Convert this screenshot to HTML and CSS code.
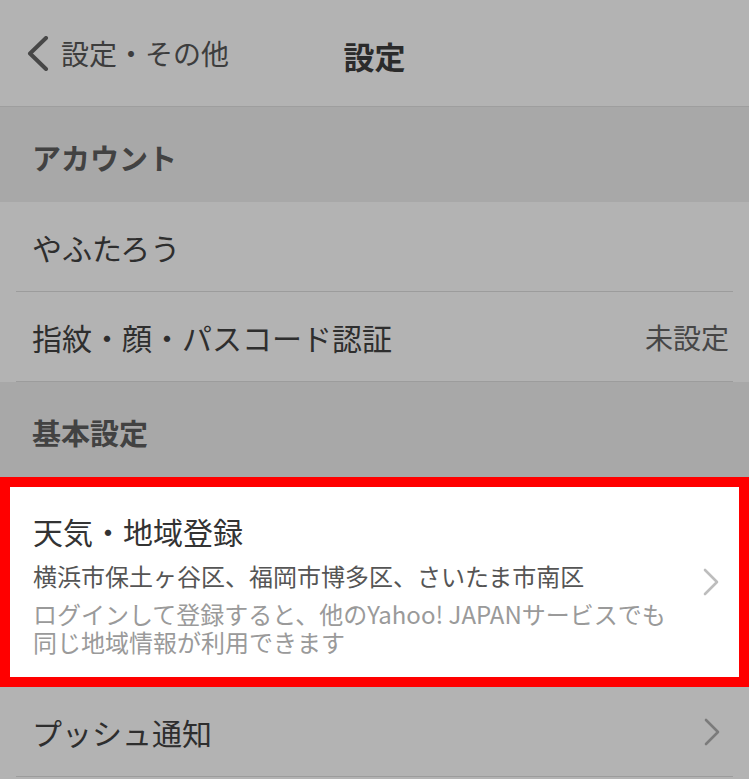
FILE: index.html
```html
<!DOCTYPE html>
<html lang="ja">
<head>
    <meta charset="UTF-8">
    <meta name="viewport" content="width=device-width, initial-scale=1.0">
    <title>設定</title>
    <link rel="stylesheet" href="styles.css">
</head>
<body>
    <div class="screen">

        <div class="nav-bar">
            <div class="nav-back">
                <svg class="back-icon" width="22" height="35" viewBox="0 0 22 35">
                    <polyline points="19,2 3,17.5 19,33" fill="none" stroke="#474747" stroke-width="4" stroke-linecap="round" stroke-linejoin="round"/>
                </svg>
                <span class="back-text">設定・その他</span>
            </div>
            <div class="nav-title">設定</div>
        </div>

        <div class="section-head">アカウント</div>
        <div class="row">
            <span class="row-label">やふたろう</span>
        </div>
        <div class="row">
            <span class="row-label">指紋・顔・パスコード認証</span>
            <span class="row-value">未設定</span>
        </div>

        <div class="section-head">基本設定</div>

        <div class="highlight">
            <div class="area-item">
                <div class="area-text">
                    <div class="area-title">天気・地域登録</div>
                    <div class="area-list">横浜市保土ヶ谷区、福岡市博多区、さいたま市南区</div>
                    <div class="area-note">ログインして登録すると、他のYahoo! JAPANサービスでも<br>同じ地域情報が利用できます</div>
                </div>
                <svg class="chevron" width="16" height="28" viewBox="0 0 16 28">
                    <polyline points="2,2 14,14 2,26" fill="none" stroke="#bdbdbd" stroke-width="2.6" stroke-linecap="round" stroke-linejoin="round"/>
                </svg>
            </div>
        </div>

        <div class="row">
            <span class="row-label">プッシュ通知</span>
            <svg class="chevron" width="16" height="28" viewBox="0 0 16 28">
                <polyline points="2,2 14,14 2,26" fill="none" stroke="#7b7b7b" stroke-width="2.6" stroke-linecap="round" stroke-linejoin="round"/>
            </svg>
        </div>

    </div>
</body>
</html>
```

FILE: styles.css
```css
body {
    margin: 0;
    font-family: "Noto Sans CJK JP", "Noto Sans", sans-serif;
    background: #b3b3b3;
}
.screen {
    width: 749px;
    height: 779px;
    overflow: hidden;
    background: #b3b3b3;
}

/* top bar */
.nav-bar {
    position: relative;
    height: 106px;
    border-bottom: 1px solid #9e9e9e;
    display: flex;
    align-items: center;
    justify-content: center;
}
.nav-back {
    position: absolute;
    left: 27px;
    top: 36px;
    display: flex;
    align-items: center;
    gap: 12px;
}
.back-text {
    font-size: 28px;
    color: #3d3d3d;
    line-height: 36px;
    margin-top: -2px;
}
.nav-title {
    font-size: 31px;
    font-weight: bold;
    color: #2b2b2b;
    margin-top: 5px;
}

/* section headers */
.section-head {
    height: 95px;
    background: #a8a8a8;
    display: flex;
    align-items: center;
    padding: 5px 32px 0;
    box-sizing: border-box;
    font-size: 29px;
    font-weight: bold;
    color: #424242;
}

/* plain rows */
.row {
    height: 89px;
    margin: 0 16px;
    padding: 0 4px 0 16px;
    border-bottom: 1px solid #9c9c9c;
    display: flex;
    align-items: center;
    justify-content: space-between;
}
.row-label {
    font-size: 30px;
    color: #2e2e2e;
}
.row-value {
    font-size: 28px;
    color: #464646;
}
.row .chevron {
    margin-right: 9px;
}

/* highlighted item */
.highlight {
    border: 10px solid #ff0000;
    background: #fff;
}
.area-item {
    height: 190px;
    padding: 0 20px 0 23px;
    display: flex;
    align-items: center;
    justify-content: space-between;
}
.area-text {
    padding-top: 3px;
}
.area-title {
    font-size: 30px;
    line-height: 40px;
    color: #333;
}
.area-list {
    font-size: 24px;
    line-height: 34px;
    color: #555;
    margin-top: 8px;
}
.area-note {
    font-size: 24px;
    line-height: 28px;
    color: #9a9a9a;
    margin-top: 7px;
}
```
